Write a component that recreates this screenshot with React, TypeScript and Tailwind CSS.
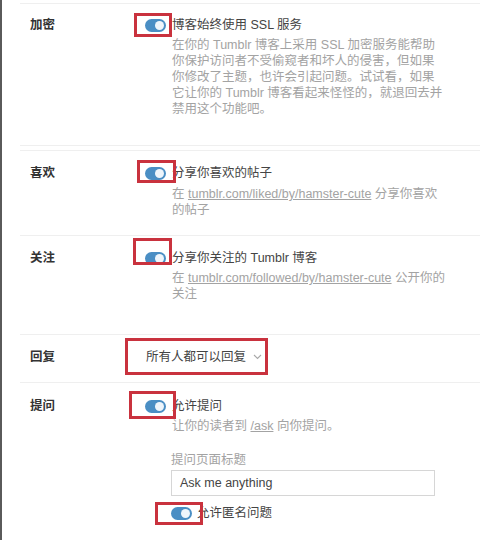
import type { ReactNode } from "react";

type Box = { left: number; top: number; width: number; height: number };

// red annotation frame drawn over a control
const Frame = ({ box }: { box: Box }) => (
  <span
    className="absolute border-[3px] border-[#c9323e] pointer-events-none"
    style={{ left: box.left, top: box.top, width: box.width, height: box.height }}
  />
);

const Toggle = ({ box }: { box: Box }) => (
  <span className="relative inline-flex w-[21px] h-[13px] rounded-full bg-[#4a8ec4] items-center justify-end pr-[2px]">
    <span className="w-[9px] h-[9px] rounded-full bg-[#eef5fb]" />
    <Frame box={box} />
  </span>
);

const Row = ({
  label,
  className,
  children,
}: {
  label: string;
  className: string;
  children: ReactNode;
}) => (
  <div className={`flex pl-[10px] ${className}`}>
    <div className="w-[115px] shrink-0 text-[12.5px] leading-[20px] font-bold text-[#333]">
      {label}
    </div>
    <div className="flex-1">{children}</div>
  </div>
);

const ToggleLine = ({ box, title }: { box: Box; title: string }) => (
  <div className="flex items-center h-[20px]">
    <div className="w-[27px] shrink-0 flex items-center pt-[1px]">
      <Toggle box={box} />
    </div>
    <span className="text-[12.5px] text-[#444] whitespace-nowrap">{title}</span>
  </div>
);

const Desc = ({ className, children }: { className: string; children: ReactNode }) => (
  <p className={`pl-[27px] text-[12.5px] leading-[16px] text-[#a3a3a3] whitespace-nowrap ${className}`}>
    {children}
  </p>
);

export default function App() {
  return (
    <div className="w-[500px] h-[540px] bg-white border-l-2 border-[#5a5a5a] overflow-hidden font-['Liberation_Sans','Noto_Sans_CJK_SC',sans-serif]">
      <div className="ml-[18px] w-[460px] pt-[3px]">
        <div className="border-t border-[#efefef]" />

        <Row label="加密" className="pt-[11px] pb-[28px] border-b border-[#efefef]">
          <ToggleLine box={{ left: -11, top: -6, width: 38, height: 24 }} title="博客始终使用 SSL 服务" />
          <Desc className="mt-[2px]">
            在你的 Tumblr 博客上采用 SSL 加密服务能帮助
            <br />
            你保护访问者不受偷窥者和坏人的侵害，但如果
            <br />
            你修改了主题，也许会引起问题。试试看，如果
            <br />
            它让你的 Tumblr 博客看起来怪怪的，就退回去并
            <br />
            禁用这个功能吧。
          </Desc>
        </Row>

        <Row label="喜欢" className="mt-[4px] border-t border-[#efefef] pt-[12px] pb-[17px]">
          <ToggleLine box={{ left: -8, top: -7, width: 39, height: 23 }} title="分享你喜欢的帖子" />
          <Desc className="mt-[3px]">
            在 <span className="underline">tumblr.com/liked/by/hamster-cute</span> 分享你喜欢
            <br />
            的帖子
          </Desc>
        </Row>

        <Row label="关注" className="border-t border-[#efefef] pt-[12px] pb-[32px]">
          <ToggleLine box={{ left: -12, top: -14, width: 39, height: 27 }} title="分享你关注的 Tumblr 博客" />
          <Desc className="mt-[2px]">
            在 <span className="underline">tumblr.com/followed/by/hamster-cute</span> 公开你的
            <br />
            关注
          </Desc>
        </Row>

        <Row label="回复" className="border-t border-[#efefef] pt-[12px] pb-[15px]">
          <div className="flex">
            <div className="relative flex items-center h-[20px] pl-[1px] pr-[4px]">
              <span className="text-[12.5px] text-[#444] whitespace-nowrap">所有人都可以回复</span>
              <svg className="ml-[7px]" width="9" height="6" viewBox="0 0 9 6" fill="none">
                <polyline points="1,1 4.5,4.5 8,1" stroke="#a8a8a8" strokeWidth="1.1" />
              </svg>
              <Frame box={{ left: -20, top: -9, width: 143, height: 37 }} />
            </div>
          </div>
        </Row>

        <Row label="提问" className="border-t border-[#efefef] pt-[13px]">
          <ToggleLine box={{ left: -16, top: -9, width: 47, height: 28 }} title="允许提问" />
          <Desc className="mt-[2px]">
            让你的读者到 <span className="underline">/ask</span> 向你提问。
          </Desc>
          <div className="pl-[26px]">
            <div className="mt-[16px] text-[12.5px] leading-[20px] text-[#a3a3a3]">提问页面标题</div>
            <div className="w-[264px] h-[26px] border border-[#d6d6d6] flex items-center pl-[8px] text-[12.5px] text-[#444]">
              Ask me anything
            </div>
            <div className="mt-[7px] flex items-center h-[20px]">
              <div className="w-[26px] shrink-0 flex items-center pt-[1px]">
                <Toggle box={{ left: -16, top: -5, width: 48, height: 23 }} />
              </div>
              <span className="text-[12.5px] text-[#444] whitespace-nowrap">允许匿名问题</span>
            </div>
          </div>
        </Row>
      </div>
    </div>
  );
}
